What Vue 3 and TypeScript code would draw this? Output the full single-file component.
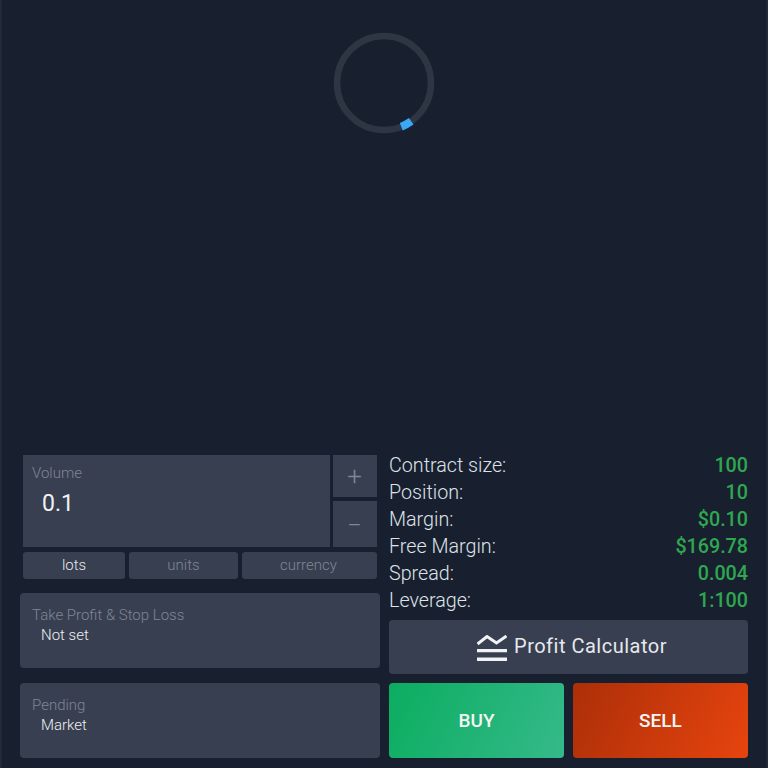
<script setup lang="ts">
const stats: [string, string][] = [
  ['Contract size:', '100'],
  ['Position:', '10'],
  ['Margin:', '$0.10'],
  ['Free Margin:', '$169.78'],
  ['Spread:', '0.004'],
  ['Leverage:', '1:100'],
]
</script>

<template>
  <div class="page">
    <div class="spinner-area">
      <svg class="spinner" width="104" height="104" viewBox="0 0 104 104">
        <circle cx="52" cy="52" r="47" fill="none" stroke="#2e3643" stroke-width="6.5" />
        <path d="M69.3 95.7 A47 47 0 0 0 79.2 90.3" fill="none" stroke="#3aa8f5" stroke-width="8" />
      </svg>
    </div>
    <div class="panel">
      <div class="left">
        <div class="volume-block">
          <div class="volume-row">
            <div class="volume-field">
              <div class="label">Volume</div>
              <div class="volume-value">0.1</div>
            </div>
            <div class="steppers">
              <div class="step step-plus">+</div>
              <div class="step step-minus">−</div>
            </div>
          </div>
          <div class="units">
            <div class="unit unit-lots active">lots</div>
            <div class="unit unit-units">units</div>
            <div class="unit unit-currency">currency</div>
          </div>
        </div>
        <div class="card">
          <div class="label">Take Profit &amp; Stop Loss</div>
          <div class="card-value">Not set</div>
        </div>
        <div class="card">
          <div class="label">Pending</div>
          <div class="card-value">Market</div>
        </div>
      </div>
      <div class="right">
        <div class="stats">
          <div v-for="s in stats" :key="s[0]" class="stat">
            <span class="stat-name">{{ s[0] }}</span>
            <span class="stat-value">{{ s[1] }}</span>
          </div>
        </div>
        <div class="calc">
          <svg class="calc-icon" width="30" height="26" viewBox="0 0 30 26">
            <path d="M0.5 9 L10 1.5 L19.5 8 L29.5 1" fill="none" stroke="#f0f2f6" stroke-width="3" />
            <path d="M0 14 H30 V17.2 H0 Z M0 22.5 H30 V26 H0 Z" fill="#f0f2f6" />
          </svg>
          <span class="calc-text">Profit Calculator</span>
        </div>
        <div class="actions">
          <div class="action buy">BUY</div>
          <div class="action sell">SELL</div>
        </div>
      </div>
    </div>
  </div>
</template>

<style>
html, body { margin: 0; background: #182030; }
</style>

<style scoped>
.page {
  box-sizing: border-box;
  width: 768px;
  height: 768px;
  display: flex;
  flex-direction: column;
  background: #182030;
  border-left: 2px solid #212a3a;
  border-right: 2px solid #212a3a;
  font-family: Roboto, "Liberation Sans", sans-serif;
  overflow: hidden;
}
.spinner-area {
  flex: 1;
  display: flex;
  justify-content: center;
  align-items: flex-start;
  padding-top: 31px;
}
.panel {
  display: flex;
  gap: 9px;
  padding: 0 18px 10px 18px;
}
.left {
  width: 360px;
  display: flex;
  flex-direction: column;
}
.volume-block {
  padding: 0 3px;
  margin-top: 4px;
  margin-bottom: 14px;
}
.volume-row {
  display: flex;
  gap: 3px;
  height: 92px;
}
.volume-field {
  flex: 1;
  background: #383f50;
  padding: 9px 9px 0;
  box-sizing: border-box;
}
.label {
  font-size: 15px;
  line-height: 18px;
  font-weight: 300;
  color: #7f8695;
}
.volume-value {
  font-size: 23px;
  line-height: 28px;
  font-weight: 400;
  color: #f0f2f5;
  margin: 8px 0 0 10px;
}
.steppers {
  width: 44px;
  display: flex;
  flex-direction: column;
  gap: 4px;
}
.step {
  background: #383f50;
  color: #7f8695;
  font-size: 26px;
  font-weight: 300;
  display: flex;
  align-items: center;
  justify-content: center;
  padding-right: 1px;
  box-sizing: border-box;
}
.step-plus { height: 42px; }
.step-minus { flex: 1; padding-top: 1px; }
.units {
  display: flex;
  gap: 4px;
  margin-top: 5px;
}
.unit {
  height: 27px;
  box-sizing: border-box;
  padding-bottom: 2px;
  background: #383f50;
  border-radius: 3px;
  font-size: 15px;
  font-weight: 300;
  color: #7f8695;
  display: flex;
  align-items: center;
  justify-content: center;
}
.unit.active { color: #e6e9ee; }
.unit-lots { width: 102px; }
.unit-units { width: 109px; }
.unit-currency { flex: 1; padding-right: 2px; }
.card {
  height: 75px;
  box-sizing: border-box;
  background: #383f50;
  border-radius: 4px;
  padding: 13px 12px 0;
}
.card + .card { margin-top: 15px; }
.card-value {
  font-size: 15px;
  line-height: 20px;
  font-weight: 300;
  color: #eef0f3;
  margin: 1px 0 0 9px;
}
.right {
  flex: 1;
  display: flex;
  flex-direction: column;
}
.stats {
  display: flex;
  flex-direction: column;
  margin-bottom: 7px;
}
.stat {
  display: flex;
  justify-content: space-between;
  align-items: flex-start;
  height: 27px;
  font-size: 19.7px;
}
.stat span { line-height: 29px; }
.stat-name { font-weight: 300; color: #dfe3e8; }
.stat-value { font-weight: 500; color: #2ea84f; }
.calc {
  height: 54px;
  background: #383f50;
  border-radius: 4px;
  display: flex;
  align-items: center;
  justify-content: center;
  gap: 7px;
  padding-left: 7px;
  box-sizing: border-box;
  color: #e6e9ee;
  font-size: 20px;
  letter-spacing: 0.5px;
}
.calc-icon { margin-top: 1px; }
.calc-text { margin-bottom: 2px; }
.actions {
  display: flex;
  gap: 9px;
  margin-top: 9px;
}
.action {
  flex: 1;
  height: 75px;
  border-radius: 4px;
  display: flex;
  align-items: center;
  justify-content: center;
  font-size: 19px;
  font-weight: 500;
  color: #f3f6f4;
}
.buy { background: linear-gradient(115deg, #0bad60 0%, #35b98a 100%); }
.sell { background: linear-gradient(115deg, #ac2f08 0%, #e7440e 100%); }
</style>
